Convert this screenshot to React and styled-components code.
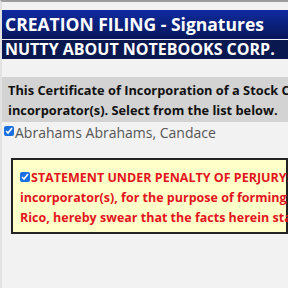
import React from 'react';
import styled, { createGlobalStyle } from 'styled-components';

const GlobalStyle = createGlobalStyle`
  html, body {
    margin: 0;
    padding: 0;
    background: #f2f2f2;
    font-family: "Open Sans", "Liberation Sans", sans-serif;
  }
`;

const Page = styled.div`
  min-height: 288px;
  border-top: 2px solid #9c9c9c;
  border-left: 2px solid #e2e2e2;
  box-sizing: border-box;
  padding-top: 8px;
  overflow: hidden;
  width: 288px;
`;

const TitleBar = styled.div`
  background: linear-gradient(#0f2aa0, #071658);
  color: #fff;
  font-weight: 700;
  font-size: 17.5px;
  line-height: 29px;
  height: 29px;
  padding-left: 3px;
  white-space: nowrap;
`;

const CompanyBar = styled.div`
  margin-top: 1px;
  background: #0a1850;
  color: #fff;
  font-weight: 700;
  font-size: 16px;
  line-height: 19px;
  height: 19px;
  padding-left: 3px;
  white-space: nowrap;
`;

const Notice = styled.div`
  margin-top: 18px;
  background: #d3d3d3;
  color: #111;
  font-weight: 700;
  font-size: 12.8px;
  line-height: 20px;
  padding: 3px 0 2px 6px;
  white-space: nowrap;
`;

const Row = styled.label`
  display: flex;
  align-items: center;
  margin-top: 3px;
  color: #555;
  font-size: 14px;
  line-height: 16px;
  padding-left: 2px;
`;

const Check = styled.input.attrs({ type: 'checkbox', defaultChecked: true })`
  width: 10px;
  height: 10px;
  margin: 0 1px 4px 0;
  accent-color: #1a6fe0;
  vertical-align: middle;
`;

const Statement = styled.div`
  margin: 17px 0 0 9px;
  border: 2px solid #222;
  background: #ffffca;
  color: #e3141c;
  font-weight: 700;
  font-size: 12.5px;
  line-height: 20px;
  padding: 8px 0 4px 7px;
  white-space: nowrap;
`;

export default function App() {
  return (
    <>
      <GlobalStyle />
      <Page>
        <TitleBar>CREATION FILING - Signatures</TitleBar>
        <CompanyBar>NUTTY ABOUT NOTEBOOKS CORP.</CompanyBar>
        <Notice>
          This Certificate of Incorporation of a Stock Corporation is signed by the
          <br />
          incorporator(s). Select from the list below.
        </Notice>
        <Row>
          <Check />
          Abrahams Abrahams, Candace
        </Row>
        <Statement>
          <Check />
          STATEMENT UNDER PENALTY OF PERJURY: We, the
          <br />
          incorporator(s), for the purpose of forming a corporation
          <br />
          Rico, hereby swear that the facts herein stated are true.
        </Statement>
      </Page>
    </>
  );
}
